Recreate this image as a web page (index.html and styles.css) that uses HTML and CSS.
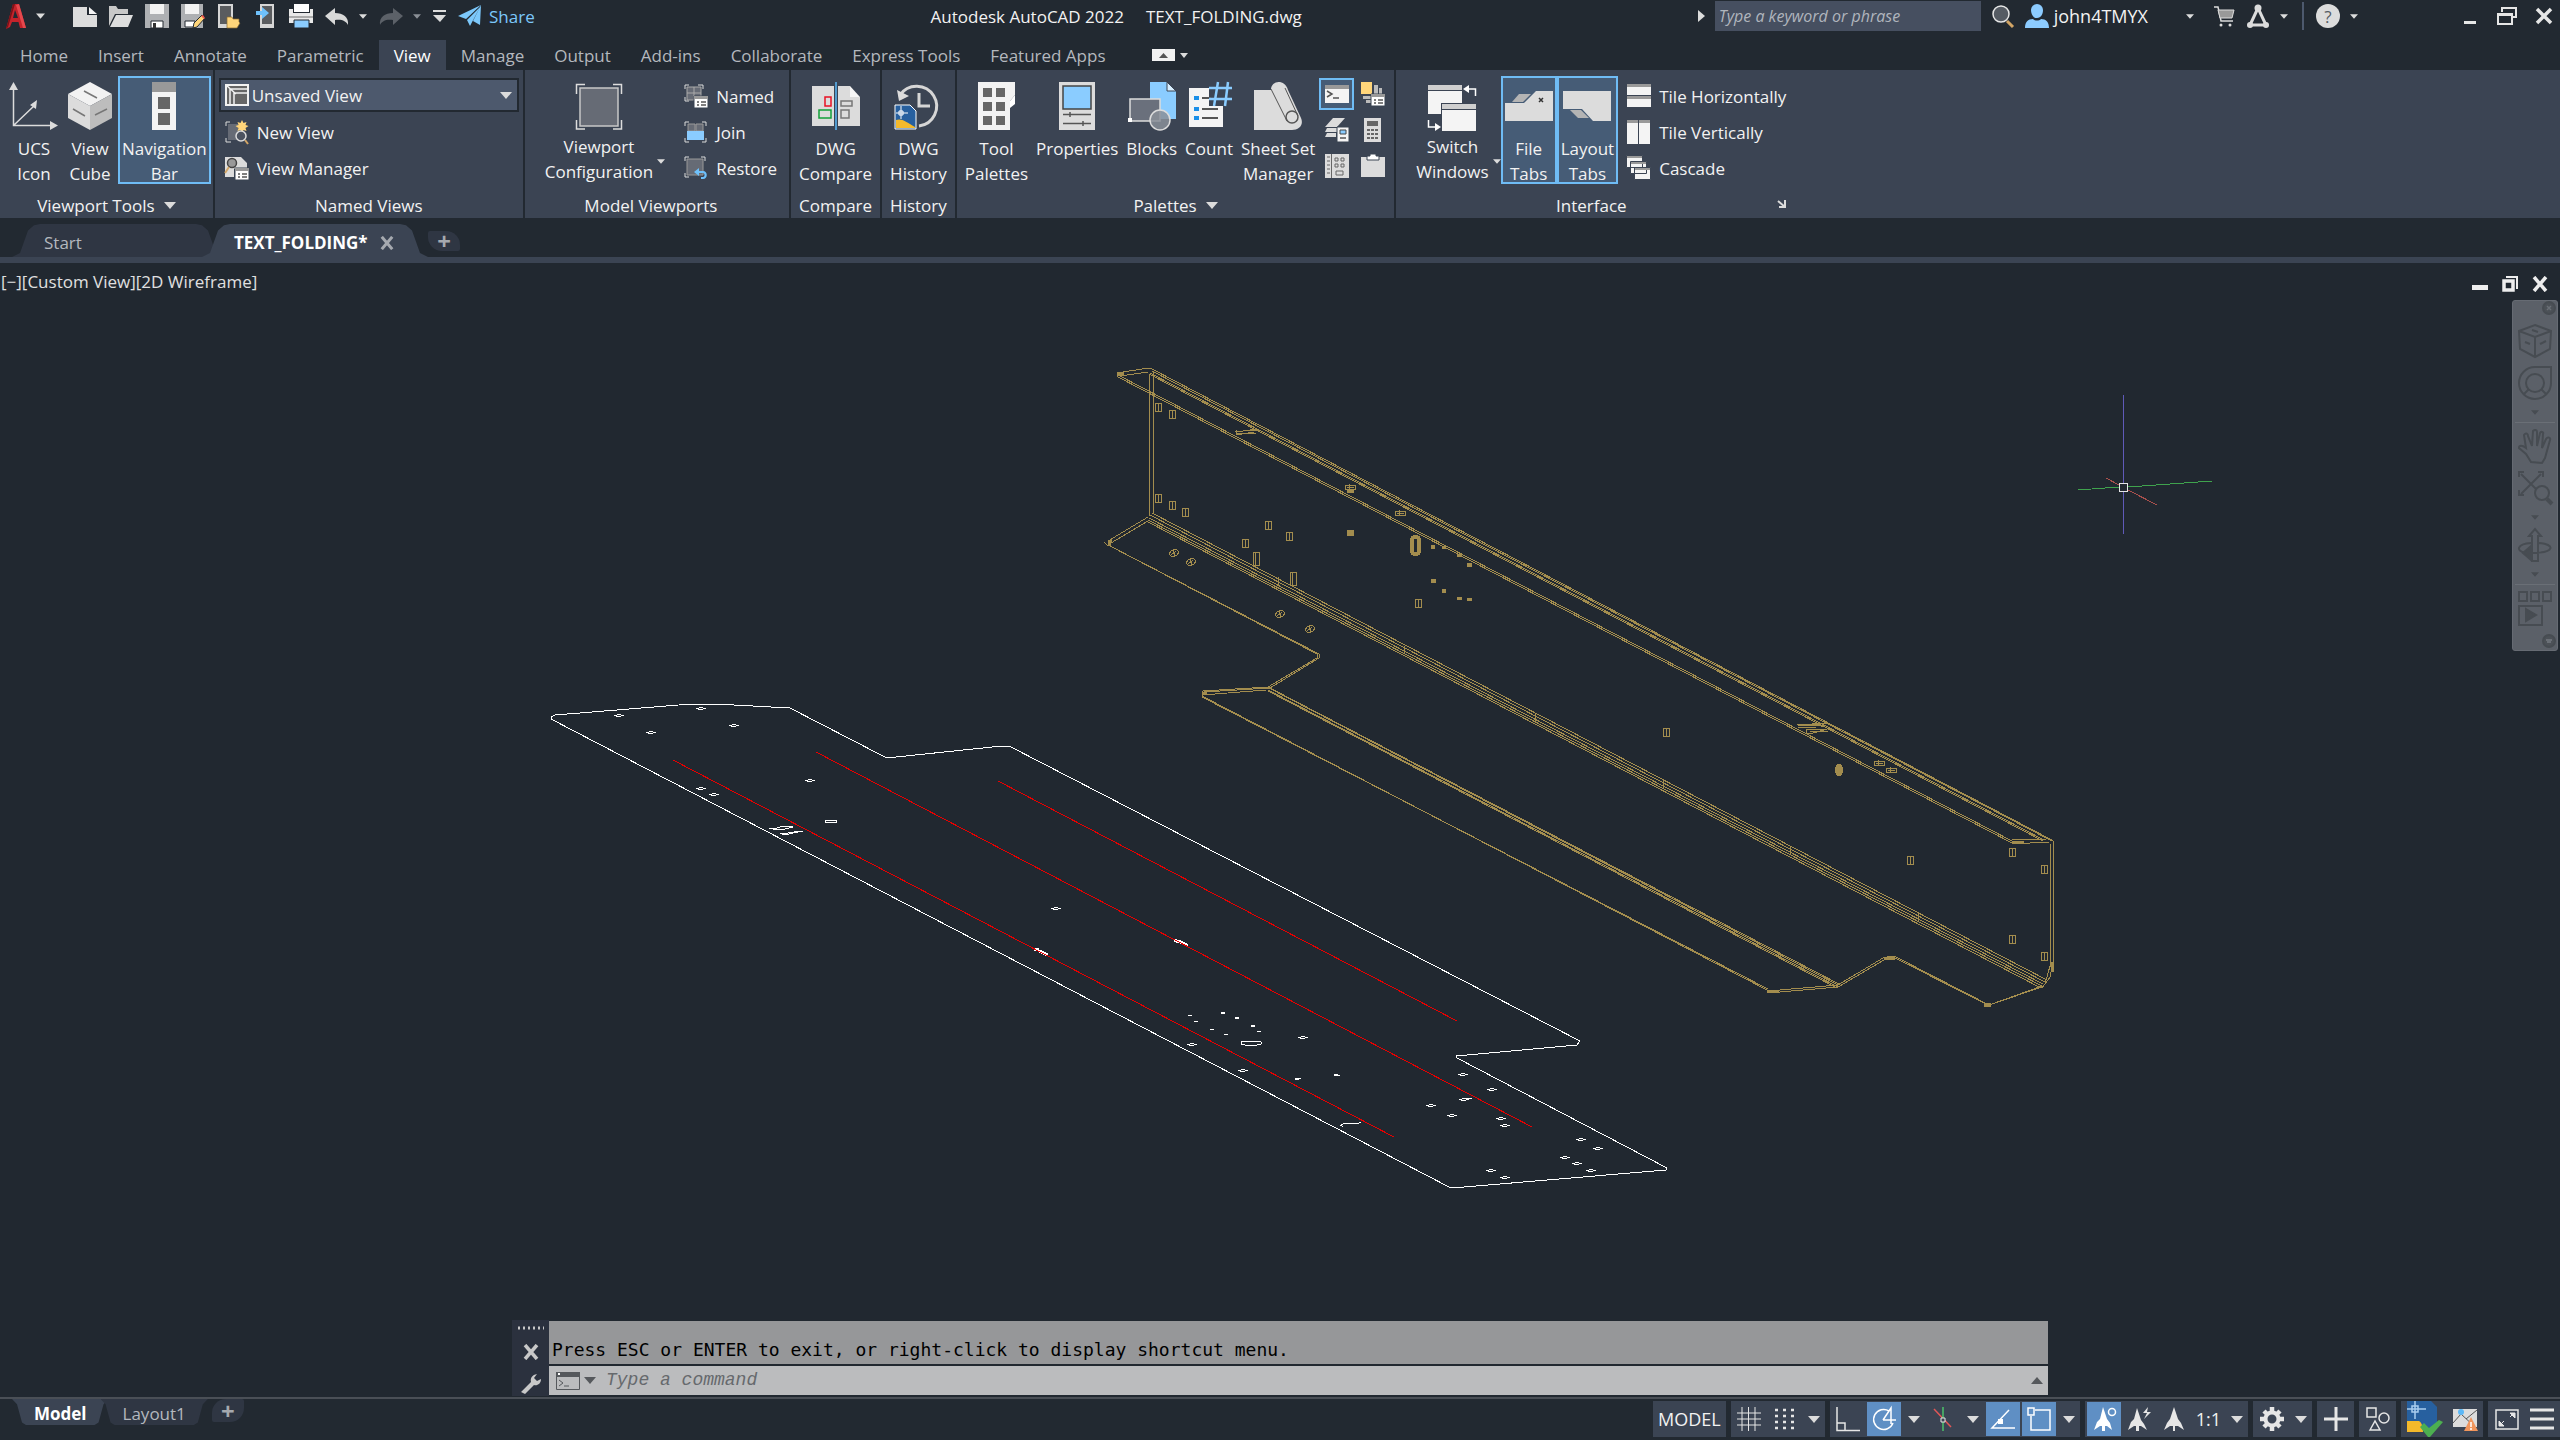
FILE: index.html
```
<!DOCTYPE html>
<html lang="en">
<head>
    <meta charset="UTF-8">
    <meta name="viewport" content="width=device-width, initial-scale=1.0">
    <title>Autodesk AutoCAD 2022 - TEXT_FOLDING.dwg</title>
    <link rel="stylesheet" href="styles.css">
</head>
<body>
    <!-- shared shapes -->
    <svg class="defs" width="0" height="0">
        <defs>
            <symbol id="caret" viewBox="0 0 12 7"><path d="M0 0h12L6 7z" fill="currentColor"/></symbol>
            <symbol id="x" viewBox="0 0 16 16"><path d="M2 1l12 14M14 1L2 15" stroke="currentColor" stroke-width="3.500"/></symbol>
            <g id="hole"><path d="M-3-4h6v8h-6zM0-4v9"/></g>
            <g id="slot"><path d="M-3-6h6v13h-6zM-1-6v13"/></g>
            <g id="tilt"><path d="M-5 1l2-3 5-2 3 3-2 3-5 2zM-3 2l5-4M-1-3l2 6"/></g>
            <g id="flat"><path d="M-5-2h10v4h-10zM-3 0h7M-1-3v6"/></g>
            <g id="pin"><path d="M-5 0h3M-2-1h4M2 0h3M-3 1h5"/></g>
        </defs>
    </svg>

    <header class="titlebar">
        <div class="quick">
            <button class="tool logo" aria-label="Application menu">
                <svg width="24" height="28" viewBox="0 0 24 28"><path d="M9 2h6l7 24h-6l-1.500-6H8l-2 5-4 2z" fill="#c4232b"/><path d="M11 8l-2 8h5z" fill="#222931"/><path d="M9 2l2 0-7 23-2 2z" fill="#7d1218"/><path d="M15 2l7 24h-3L12 3z" fill="#e5484d"/></svg>
            </button>
            <svg class="caret logo-caret"><use href="#caret"/></svg>
            <button class="tool" aria-label="New"><svg width="24" height="24" viewBox="0 0 24 24"><path d="M0 3h14v8h10v12H0z" fill="#dcdcdc"/><path d="M16 3l8 7h-8z" fill="#f4f4f4"/></svg></button>
            <button class="tool" aria-label="Open"><svg width="24" height="24" viewBox="0 0 24 24"><path d="M0 22V2h7l2 3h10v5H6z" fill="#c8c8c8"/><path d="M7 11h17l-5 12H1z" fill="#dedede"/></svg></button>
            <button class="tool" aria-label="Save"><svg width="24" height="24" viewBox="0 0 24 24"><path d="M0 0h24v24H0z" fill="#aeb0b3"/><path d="M5 0h14v10H5z" fill="#f2f2f2"/><path d="M6 17h12v7H6z" fill="#fff" stroke="#222931"/><path d="M8 19h3v5H8z" fill="#333"/></svg></button>
            <button class="tool" aria-label="Save As"><svg width="24" height="24" viewBox="0 0 24 24"><path d="M0 0h22v24H0z" fill="#aeb0b3"/><path d="M4 0h14v10H4z" fill="#f2f2f2"/><path d="M4 17h10v6H4z" fill="#fff" stroke="#222931"/><path d="M12 24l1-5 8-8 3 3-8 9z" fill="#ffd57a" stroke="#222931"/><path d="M20 12l2-1 2 3-1 1z" fill="#f0574f"/></svg></button>
            <button class="tool" aria-label="Open from Web and Mobile"><svg width="24" height="24" viewBox="0 0 24 24"><path d="M1 0h15v24H1z" fill="#d6d6d6"/><path d="M3 2h11v18H3z" fill="#5a5c5f"/><path d="M10 24V13h5l1 2h6v3l1 1-3 5z" fill="#ffd57a" stroke="#8a6a30" stroke-width=".7"/></svg></button>
            <button class="tool" aria-label="Save to Web and Mobile"><svg width="24" height="24" viewBox="0 0 24 24"><path d="M7 0h14v24H7z" fill="#d6d6d6"/><path d="M9 2h10v18H9z" fill="#5a5c5f"/><path d="M3 7h6V3l7 6-7 6v-4H3z" fill="#6fc1fb"/></svg></button>
            <button class="tool" aria-label="Plot"><svg width="24" height="24" viewBox="0 0 24 24"><path d="M5 0h15v8H5z" fill="#fff"/><path d="M0 5h4v4h17V5h3v14H0z" fill="#e8e8e8"/><path d="M0 12h24v2H0z" fill="#aaa"/><path d="M5 16h15v8H5z" fill="#8accff" stroke="#222931"/></svg></button>
            <button class="tool" aria-label="Undo"><svg width="24" height="24" viewBox="0 0 24 24"><path d="M0 12l10-8v5c8 0 14 4 13 12-2-4-6-6-13-5v5z" fill="#d9d9d9"/></svg></button>
            <svg class="caret small"><use href="#caret"/></svg>
            <button class="tool" aria-label="Redo"><svg width="24" height="24" viewBox="0 0 24 24"><path d="M24 12L14 4v5C6 9 0 13 1 21c2-4 6-6 13-5v5z" fill="#5c6168"/></svg></button>
            <svg class="caret small dim"><use href="#caret"/></svg>
            <button class="tool" aria-label="Customize Quick Access Toolbar"><svg width="13" height="12" viewBox="0 0 13 12"><path d="M0 0h13v2H0zM0 5h13l-6 7z" fill="#dcdcdc"/></svg></button>
            <button class="tool share"><svg width="24" height="24" viewBox="0 0 24 24"><path d="M0 12L23 1 8 15zM23 1l-1 20-7-4zM9 16L22 3 12 22z" fill="#7cc8fb"/></svg>Share</button>
        </div>
        <h1 class="doc-title"><span>Autodesk AutoCAD 2022</span><span>TEXT_FOLDING.dwg</span></h1>
        <div class="account">
            <svg width="7" height="12" viewBox="0 0 7 12"><path d="M0 0l7 6-7 6z" fill="#dcdcdc"/></svg>
            <input class="search" type="text" placeholder="Type a keyword or phrase" aria-label="Search help">
            <button class="tool" aria-label="Search"><svg width="24" height="24" viewBox="0 0 24 24"><path d="M16 17l6 6" stroke="#d2a566" stroke-width="3"/><circle cx="10" cy="10" r="8" fill="#555b63" stroke="#e6e6e6" stroke-width="1.500"/></svg></button>
            <button class="tool user"><svg width="24" height="24" viewBox="0 0 24 24"><path d="M6 6a6 6 0 0 1 12 0c0 4-2 8-6 8s-6-4-6-8zM0 24c0-6 3-9 8-9 2 2 6 2 8 0 5 0 8 3 8 9z" fill="#8ccbff"/></svg>john4TMYX</button>
            <svg class="caret small"><use href="#caret"/></svg>
            <button class="tool cart" aria-label="App Store"><svg width="24" height="24" viewBox="0 0 24 24"><path d="M2 3h4l3 14h12" fill="none" stroke="#dcdcdc" stroke-width="1.500"/><path d="M6 6h16l-2 8H8z" fill="#999" stroke="#dcdcdc"/><circle cx="9" cy="21" r="1.500" fill="#dcdcdc"/><circle cx="18" cy="21" r="1.500" fill="#dcdcdc"/></svg></button>
            <button class="tool" aria-label="Autodesk App"><svg width="24" height="24" viewBox="0 0 24 24"><path d="M12 4L4 21h16z" fill="none" stroke="#dcdcdc" stroke-width="3"/><circle cx="12" cy="4" r="3.500" fill="#dcdcdc"/><circle cx="4" cy="21" r="3" fill="#dcdcdc"/><circle cx="20" cy="21" r="3" fill="#dcdcdc"/></svg></button>
            <svg class="caret small"><use href="#caret"/></svg>
            <span class="divider"></span>
            <button class="tool help" aria-label="Help">?</button>
            <svg class="caret small"><use href="#caret"/></svg>
            <div class="window-buttons">
                <button class="tool" aria-label="Minimize"><svg width="24" height="24" viewBox="0 0 24 24"><path d="M6 17h12v3H6z" fill="#e6e6e6"/></svg></button>
                <button class="tool" aria-label="Restore"><svg width="24" height="24" viewBox="0 0 24 24"><path d="M7 8V4h14v9h-4M3 10h14v10H3zM3 11h14" fill="none" stroke="#e6e6e6" stroke-width="2"/></svg></button>
                <button class="tool" aria-label="Close"><svg width="24" height="24" viewBox="0 0 24 24"><path d="M5 5l14 14M19 5L5 19" stroke="#e6e6e6" stroke-width="3.500"/></svg></button>
            </div>
        </div>
    </header>

    <nav class="tabs">
        <button>Home</button>
        <button>Insert</button>
        <button>Annotate</button>
        <button>Parametric</button>
        <button class="active">View</button>
        <button>Manage</button>
        <button>Output</button>
        <button>Add-ins</button>
        <button>Collaborate</button>
        <button>Express Tools</button>
        <button>Featured Apps</button>
        <button class="minimize" aria-label="Minimize ribbon"><svg width="36" height="12" viewBox="0 0 36 12"><path d="M0 0h23v12H0z" fill="#f2f2f2"/><path d="M7 9l4.500-5L16 9z" fill="#555"/><path d="M28 4h8l-4 5z" fill="#dcdcdc"/></svg></button>
    </nav>

    <div class="ribbon">
        <section class="panel tools">
            <div class="panel-body">
                <button class="tall"><svg width="48" height="48" viewBox="0 0 48 48"><path d="M3.500 6v37.500H42M3.500 43.500L25 23" fill="none" stroke="#dcdcdc" stroke-width="1.500"/><path d="M-1 8L3.500 0 8 8zM40 39l8 4.500-8 4.500zM20 23l7-5-1 9z" fill="#dcdcdc"/></svg><span>UCS<br>Icon</span></button>
                <button class="tall"><svg width="48" height="48" viewBox="0 0 48 48"><path d="M24 0l22 12-22 12L2 12z" fill="#f2f2f2"/><path d="M2 12l22 12v24L2 36z" fill="#dcdcdc"/><path d="M46 12L24 24v24l22-12z" fill="#bdbdbd"/><path d="M18 9l13 7M7 27l12 7M29 33l12-6" stroke="#777" stroke-width="1.500"/></svg><span>View<br>Cube</span></button>
                <button class="tall on" aria-pressed="true"><svg width="48" height="48" viewBox="0 0 48 48"><path d="M12 0h24v48H12z" fill="#f4f4f4"/><path d="M12 0h24v10H12z" fill="#999"/><path d="M18 15h12v12H18zM18 31h12v12H18z" fill="#666"/></svg><span>Navigation<br>Bar</span></button>
            </div>
            <h2>Viewport Tools <svg class="caret"><use href="#caret"/></svg></h2>
        </section>

        <section class="panel views">
            <div class="panel-body stack">
                <label class="combo">
                    <svg width="24" height="24" viewBox="0 0 24 24"><path d="M1 2h22v20H1z" fill="#666" stroke="#f2f2f2" stroke-width="2"/><path d="M5 22V6h18M9 22V10h14M1 2l10 9" fill="none" stroke="#f2f2f2" stroke-width="1.500"/></svg>
                    <select aria-label="View"><option>Unsaved View</option></select>
                    <svg class="caret"><use href="#caret"/></svg>
                </label>
                <button class="row"><svg width="24" height="24" viewBox="0 0 24 24"><path d="M5 2H1v4M1 18v4h5" fill="none" stroke="#dcdcdc"/><path d="M3 4h10v16H3z" fill="#666b75"/><path d="M17 0l1.500 3 3-1-1 3 3 1-3 2 1 3-3-1-1.500 3-1.500-3-3 1 1-3-3-2 3-1-1-3 3 1z" fill="#ffd57a"/><path d="M20 20l3 4" stroke="#d2a566" stroke-width="2"/><circle cx="16" cy="16" r="5" fill="#4c5360" stroke="#dcdcdc" stroke-width="1.500"/></svg>New View</button>
                <button class="row"><svg width="24" height="24" viewBox="0 0 24 24"><path d="M0 1h16l6 6v6H9v8H0z" fill="#dcdcdc"/><circle cx="7" cy="7" r="4.500" fill="#999" stroke="#444" stroke-width="1.500"/><path d="M4 11l-4 6" stroke="#d2a566" stroke-width="2"/><path d="M10 12h14v12H10z" fill="#fff" stroke="#3b4453"/><path d="M10 12h14v3H10z" fill="#999"/><path d="M13 18h2M17 18h5M13 21h2M17 21h5" stroke="#555" stroke-width="1.500"/></svg>View Manager</button>
            </div>
            <h2>Named Views</h2>
        </section>

        <section class="panel viewports">
            <div class="panel-body">
                <button class="tall lifted"><svg width="48" height="48" viewBox="0 0 48 48"><path d="M5 6h38v38H5z" fill="#666b75" stroke="#c8c8c8" stroke-width="1.500"/><path d="M10 2.500H1.500V12M38 2.500h8.500V12M1.500 38v9H10M46.500 38v9H38" fill="none" stroke="#dcdcdc" stroke-width="1.500"/></svg><span>Viewport<br>Configuration</span></button>
                <svg class="caret small low"><use href="#caret"/></svg>
                <div class="stack">
                    <button class="row"><svg width="24" height="24" viewBox="0 0 24 24"><path d="M5 1H1v4M14 1h5v4M1 13v4h4" fill="none" stroke="#dcdcdc"/><path d="M3 3h14v13H3zM10 3v13M3 9h14" fill="#666b75" stroke="#aaa"/><path d="M10 12h14v12H10z" fill="#fff" stroke="#3b4453"/><path d="M10 12h14v3H10z" fill="#999"/><path d="M13 18h2M17 18h5M13 21h2M17 21h5" stroke="#555" stroke-width="1.500"/></svg>Named</button>
                    <button class="row"><svg width="24" height="24" viewBox="0 0 24 24"><path d="M5 2H1v4M18 2h4v4M1 18v4h4M22 18v4h-4" fill="none" stroke="#dcdcdc"/><path d="M4 4h7v7H4zM12 4h7v7h-7z" fill="#666b75" stroke="#999"/><path d="M3 11h17v9H3z" fill="#8accff"/></svg>Join</button>
                    <button class="row"><svg width="24" height="24" viewBox="0 0 24 24"><path d="M5 1H1v4M17 1h4v4M1 17v4h4" fill="none" stroke="#dcdcdc"/><path d="M3 3h16v16H3z" fill="#666b75" stroke="#999"/><path d="M15 12v3h4c5 0 5 8 0 8h-2v-2h2c2 0 2-4 0-4h-4v3l-5-4z" fill="#6fc1fb"/></svg>Restore</button>
                </div>
            </div>
            <h2>Model Viewports</h2>
        </section>

        <section class="panel narrow">
            <div class="panel-body">
                <button class="tall"><svg width="48" height="48" viewBox="0 0 48 48"><path d="M0 4h22v40H0zM26 4h12v11h10v29H26z" fill="#dcdcdc"/><path d="M38 4l10 11H38z" fill="#f6f6f6"/><path d="M24 0v48" stroke="#5cb8f7" stroke-width="1.500"/><path d="M13 15h6v9h-6z" fill="none" stroke="#e81123" stroke-width="1.500"/><path d="M7 28h12v8H7z" fill="none" stroke="#12a038" stroke-width="1.500"/><path d="M29 19h11v5H29zM29 28h8v8h-8z" fill="none" stroke="#777" stroke-width="1.500"/></svg><span>DWG<br>Compare</span></button>
            </div>
            <h2>Compare</h2>
        </section>

        <section class="panel narrow">
            <div class="panel-body">
                <button class="tall"><svg width="48" height="48" viewBox="0 0 48 48"><path d="M6 13a20 20 0 1 1 19 31" fill="none" stroke="#d6d6d6" stroke-width="3"/><path d="M3 8l2 11 10-5z" fill="#dcdcdc"/><path d="M25 11v13h11" fill="none" stroke="#d6d6d6" stroke-width="3"/><path d="M1 23h15l6 6v18H1z" fill="#27609f" stroke="#fff"/><path d="M2 38c6-2 10 2 19 7v1H2z" fill="#f4b92b"/><path d="M7 24v13M2 31h12M5 29h4v4H5z" fill="none" stroke="#fff"/></svg><span>DWG<br>History</span></button>
            </div>
            <h2>History</h2>
        </section>

        <section class="panel narrow">
            <div class="panel-body">
                <button class="tall"><svg width="48" height="48" viewBox="0 0 48 48"><path d="M6 0h37v13l-5 6v29H6z" fill="#f2f2f2"/><path d="M43 13v9l-5 4v-7z" fill="#fff"/><path d="M11 6h9v9h-9zM24 6h9v9h-9zM11 20h9v9h-9zM24 20h9v9h-9zM11 34h9v9h-9zM24 34h9v9h-9z" fill="#666"/></svg><span>Tool<br>Palettes</span></button>
                <button class="tall"><svg width="48" height="48" viewBox="0 0 48 48"><path d="M6 0h36v48H6z" fill="#dcdcdc"/><path d="M10 4h28v23H10z" fill="#8accff" stroke="#444" stroke-width="1.500"/><path d="M10 32.500h28M10 41.500h28M17 30v5M30 39v5" stroke="#555" stroke-width="1.500"/></svg><span>Properties</span></button>
                <button class="tall"><svg width="48" height="48" viewBox="0 0 48 48"><path d="M22 0h17l9 9v28H22z" fill="#8accff"/><path d="M39 0v9h9z" fill="#d8eeff" stroke="#3b4453"/><path d="M2 17h30v22H2z" fill="#6a707c" stroke="#dcdcdc" stroke-width="1.500"/><circle cx="32" cy="38" r="10" fill="#8a8f99" fill-opacity=".85" stroke="#dcdcdc" stroke-width="1.500"/><path d="M0 36h4v4H0z" fill="#fff"/></svg><span>Blocks</span></button>
                <button class="tall"><svg width="48" height="48" viewBox="0 0 48 48"><path d="M4 6h20v18h14v21H4z" fill="#f4f4f4"/><path d="M9 14h5v4H9zM9 25h5v4H9zM9 34h5v4H9z" fill="#1a8fe8"/><path d="M17 16h9M17 27h16M17 36h16" stroke="#555" stroke-width="2"/><path d="M24 6h23M24 17h23M33 0l-4 24M43 0l-3 24" stroke="#8accff" stroke-width="2.500"/></svg><span>Count</span></button>
                <button class="tall"><svg width="48" height="48" viewBox="0 0 48 48"><path d="M0 8h17c0-10 14-11 17 0l13 28c3 7-2 12-9 12H0z" fill="#dcdcdc"/><path d="M17 7l16 32M31 6l13 28" fill="none" stroke="#555" stroke-width="1"/><circle cx="38" cy="35" r="6" fill="none" stroke="#555" stroke-width="1.500"/></svg><span>Sheet Set<br>Manager</span></button>
                <div class="mini">
                    <button class="on" aria-label="Command line" aria-pressed="true"><svg width="24" height="24" viewBox="0 0 24 24"><path d="M0 3h24v18H0z" fill="#f4f4f4"/><path d="M0 3h24v4H0z" fill="#999"/><path d="M2 9l5 3-5 3M8 16h6" fill="none" stroke="#555" stroke-width="1.500"/></svg></button>
                    <button aria-label="Design center"><svg width="24" height="24" viewBox="0 0 24 24"><path d="M0 0h11v12H0z" fill="#ffd57a"/><path d="M13 3h4v9h-4zM18 6h3v6h-3zM2 14h8v3H2zM5 18h5v3H5z" fill="#bbb"/><path d="M10 12h14v12H10z" fill="#fff" stroke="#3b4453"/><path d="M10 12h14v3H10z" fill="#999"/><path d="M13 18h2M17 18h5M13 21h2M17 21h5" stroke="#555" stroke-width="1.500"/></svg></button>
                    <button aria-label="Layer properties"><svg width="24" height="24" viewBox="0 0 24 24"><path d="M8 0h12l-8 9H0zM2 10h10v4H0zM2 15h9v4H0z" fill="#dcdcdc"/><path d="M12 9h12v15H12z" fill="#f4f4f4" stroke="#3b4453"/><path d="M15 12h6v4h-6z" fill="#8accff" stroke="#444"/><path d="M15 20h6" stroke="#555" stroke-width="1.500"/></svg></button>
                    <button aria-label="Quick calculator"><svg width="24" height="24" viewBox="0 0 24 24"><path d="M3 0h17v24H3z" fill="#dcdcdc"/><path d="M6 3h11v5H6zM6 11h3v2H6zM10 11h3v2h-3zM14 11h3v2h-3zM6 15h3v2H6zM10 15h3v2h-3zM14 15h3v2h-3zM6 19h3v2H6zM10 19h3v2h-3zM14 19h3v2h-3z" fill="#666"/></svg></button>
                    <button aria-label="External references"><svg width="24" height="24" viewBox="0 0 24 24"><path d="M0 0h24v24H0z" fill="#dcdcdc"/><path d="M6.500 0v24M2 3h3M2 7h3M2 11h3M2 15h3M2 19h3M10 4h3v3h-3zM16 4h3v3h-3zM10 10h3v3h-3zM16 10h3v3h-3zM11 17h7v4h-7z" fill="none" stroke="#666"/></svg></button>
                    <button aria-label="Markup set manager"><svg width="24" height="24" viewBox="0 0 24 24"><path d="M0 3h24v20H0z" fill="#dcdcdc"/><path d="M6 6V2h3V0h6v2h3v4z" fill="#fff" stroke="#3b4453"/></svg></button>
                </div>
            </div>
            <h2>Palettes <svg class="caret"><use href="#caret"/></svg></h2>
        </section>

        <section class="panel interface">
            <div class="panel-body">
                <button class="tall lifted"><svg width="48" height="48" viewBox="0 0 48 48"><path d="M0 3h34v29H0z" fill="#f4f4f4"/><path d="M0 3h34v5H0z" fill="#cfcfcf"/><path d="M0 8.500h34" stroke="#3b4453"/><path d="M13 21h35v28H13z" fill="#3b4453"/><path d="M14 22h34v27H14z" fill="#f4f4f4"/><path d="M14 22h34v5H14z" fill="#cfcfcf"/><path d="M14 27.500h34" stroke="#3b4453"/><path d="M47.500 14V7H40M.5 38v7H8" fill="none" stroke="#fff" stroke-width="1.500"/><path d="M35 7l6-4v8zM13 45l-6-4v8z" fill="#fff"/></svg><span>Switch<br>Windows</span></button>
                <svg class="caret small low"><use href="#caret"/></svg>
                <button class="tall on" aria-pressed="true"><svg width="48" height="48" viewBox="0 0 48 48"><path d="M0 21h19L31 9h17v30H0z" fill="#dcdcdc"/><path d="M7 20l7-8h12l-8 8z" fill="#b4b4b4"/><path d="M34 16l4 4M38 16l-4 4" stroke="#333" stroke-width="1.500"/></svg><span>File<br>Tabs</span></button>
                <button class="tall on" aria-pressed="true"><svg width="48" height="48" viewBox="0 0 48 48"><path d="M0 9h48v30H30L19 27H0z" fill="#dcdcdc"/><path d="M7 28h11l8 8H15z" fill="#b4b4b4"/></svg><span>Layout<br>Tabs</span></button>
                <div class="stack">
                    <button class="row"><svg width="24" height="24" viewBox="0 0 24 24"><path d="M0 0h24v11H0zM0 12h24v11H0z" fill="#f4f4f4"/><path d="M0 0h24v3H0zM0 12h24v3H0z" fill="#999"/></svg>Tile Horizontally</button>
                    <button class="row"><svg width="24" height="24" viewBox="0 0 24 24"><path d="M0 0h11v24H0zM12 0h11v24H12z" fill="#f4f4f4"/><path d="M0 0h11v3H0zM12 0h11v3H12z" fill="#999"/></svg>Tile Vertically</button>
                    <button class="row"><svg width="24" height="24" viewBox="0 0 24 24"><g stroke="#3b4453"><path d="M-.5-.5h16v12h-16zM3.500 5.500h16v12h-16zM7.500 11.500h16v12h-16z" fill="#f4f4f4"/></g><path d="M0 0h15v2H0zM4 6h15v2H4zM8 12h15v2H8z" fill="#999"/></svg>Cascade</button>
                </div>
            </div>
            <h2>Interface<button class="launcher" aria-label="Display options"><svg width="8" height="8" viewBox="0 0 8 8"><path d="M0 1l7 6M7 0v7H1" fill="none" stroke="#dcdcdc" stroke-width="2"/></svg></button></h2>
        </section>
    </div>

    <div class="file-tabs">
        <button class="file-tab">Start</button>
        <button class="file-tab active">TEXT_FOLDING*<svg class="close"><use href="#x"/></svg></button>
        <button class="add-tab" aria-label="New drawing">+</button>
    </div>

    <main class="canvas">
        <svg class="drawing" viewBox="0 263 2560 1134" preserveAspectRatio="xMidYMid slice">
            <!-- flat pattern -->
            <path class="sheet" d="M551 717l4-2 136-11h24l75 4 91 47 4 2h11l106-11 9 1 569 294-3 4-121 11 1 2 210 110-1 2-202 17h-15L551 719z"/>
            <g class="sheet">
                <use href="#pin" x="619" y="715"/><use href="#pin" x="701" y="708"/><use href="#pin" x="651" y="732"/><use href="#pin" x="734" y="725"/>
                <use href="#pin" x="810" y="780"/><use href="#pin" x="701" y="788"/><use href="#pin" x="714" y="794"/><use href="#pin" x="1056" y="908"/>
                <use href="#pin" x="1303" y="1037"/><use href="#pin" x="1192" y="1044"/><use href="#pin" x="1243" y="1070"/>
                <use href="#pin" x="1463" y="1074"/><use href="#pin" x="1492" y="1089"/><use href="#pin" x="1431" y="1105"/><use href="#pin" x="1452" y="1115"/>
                <use href="#pin" x="1464" y="1099"/><use href="#pin" x="1501" y="1118"/><use href="#pin" x="1505" y="1125"/>
                <use href="#pin" x="1581" y="1139"/><use href="#pin" x="1598" y="1148"/><use href="#pin" x="1565" y="1157"/><use href="#pin" x="1577" y="1163"/>
                <use href="#pin" x="1591" y="1170"/><use href="#pin" x="1491" y="1170"/><use href="#pin" x="1505" y="1177"/>
                <path d="M825 820h11v2h-11zM769 828h8l6-2h7l3 1-8 2h-12zM780 833h8l12-2h3l-10 2-8 2zM1243 1041h14l4 1v2l-4 1h-12l-4-1v-2zM1340 1126l3-2 16-1 2-1M1341 1125l2 2"/>
            </g>
            <path class="sheet" d="M1188 1015h4M1194 1021h4M1210 1029h4M1224 1034h4M1221 1012h4M1221 1013h4M1235 1017h4M1235 1018h4M1251 1025h4M1251 1026h4M1257 1031h4M1295 1078h6M1295 1079h4M1334 1074h4M1334 1075h6M1464 1098h8"/>
            <path class="sheet thick" d="M1034 949h5M1039 951l9 4M1174 940l5 2M1179 941l9 5"/>
            <path class="bend" d="M673 760l721 377M816 752l716 375M998 781l459 240"/>
            <!-- folded part -->
            <g class="part">
                <path d="M1148 368l4 1 898 470M1152 371l900 470M1150 373l894 467M1149 374l894 467M1117 373l31-5M1120 376l28-4M1118 375l894 466M1118 377l894 466M1117 372v5l4-3M2012 840l35-1M2012 844l37-2M2050 839l3 2v3"/>
                <path d="M1149 374v142M1153 371v142M2050 844v122l-5 18M2053 844v119l-3 14-8 11"/>
                <path d="M1152 513l895 467M1150 515l895 467M1149 518l894 466M1148 520l894 466M1148 522l893 466"/>
                <path d="M1148 517l-40 24v4l211 109v4l-49 30-66 4-2 4 565 294M1148 521l-37 22-1 3 207 108v4l-49 29-65 4-1 6 566 292M1104 542l4 4M1266 690l-64 5"/>
                <path d="M1268 687l571 297M1269 688l569 297M1268 690l570 297M1268 691l569 297"/>
                <path d="M1768 991l70-6 45-27 8-2 5 1 93 48 53-18M1768 993l70-6 46-27 11-2 93 47 4-1 50-18M1278 577v8M1404 646v8M1535 713v8M1663 780v8M1790 847v8M1918 914v8"/>
                <path d="M1235 431h8l15-2M1236 435l18-3M1236 430v5M1236 433h20M1246 430h13M1797 724h20l6 3M1798 727h18M1798 725h28M1807 729h20l-14 4h-7zM1810 731h18M1812 723h14"/>
                <use href="#hole" x="1158" y="407"/><use href="#hole" x="1172" y="414"/><use href="#hole" x="1158" y="498"/><use href="#hole" x="1172" y="505"/>
                <use href="#hole" x="1185" y="512"/><use href="#hole" x="1268" y="525"/><use href="#hole" x="1289" y="536"/><use href="#hole" x="1245" y="543"/>
                <use href="#hole" x="1418" y="603"/><use href="#hole" x="1666" y="732"/><use href="#hole" x="1910" y="860"/><use href="#hole" x="2012" y="852"/>
                <use href="#hole" x="2044" y="869"/><use href="#hole" x="2012" y="939"/><use href="#hole" x="2044" y="956"/>
                <use href="#slot" x="1256" y="558"/><use href="#slot" x="1293" y="578"/>
                <use href="#tilt" x="1174" y="553"/><use href="#tilt" x="1191" y="562"/><use href="#tilt" x="1280" y="614"/><use href="#tilt" x="1310" y="629"/>
                <use href="#flat" x="1350" y="487"/><use href="#flat" x="1400" y="513"/><use href="#flat" x="1879" y="763"/><use href="#flat" x="1891" y="770"/>
            </g>
            <g class="solid">
                <path d="M1118 372h6v3h-6zM1108 540l4-1v4l-3 2zM1202 692h5v3h-5zM1767 990h12v3h-12zM1884 957h11v3h-11zM1984 1003h7v4h-7zM2012 841h12v3h-12zM2050 962h4v10h-3zM1347 489h7v4h-7zM1347 530h7v6h-7z"/>
                <ellipse cx="1839" cy="770" rx="4" ry="6"/>
                <path d="M1431 545h4v4h-4zM1442 546h4v3h-4zM1457 554h5v3h-5zM1467 563h5v4h-5zM1431 579h5v4h-5zM1442 589h4v4h-4zM1457 597h5v3h-5zM1467 598h5v3h-5z"/>
            </g>
            <rect class="ring" x="1412" y="537" width="7" height="17" rx="3"/>
            <!-- crosshair -->
            <g class="cross">
                <path d="M2123 395v88M2123 492v42" stroke="#5f5ab8"/>
                <path d="M2078 490l41-3M2128 487l84-6" stroke="#3fa34d"/>
                <path d="M2106 478l13 7M2128 490l29 15" stroke="#a8504c"/>
                <path d="M2119 483h8v8h-8z" stroke="#e6e6e6"/>
            </g>
        </svg>

        <div class="view-head">
            <p class="view-label">[−][Custom View][2D Wireframe]</p>
            <div class="mdi">
                <button aria-label="Minimize drawing"><svg width="16" height="16" viewBox="0 0 16 16"><path d="M0 9h16v5H0z" fill="#eee"/></svg></button>
                <button aria-label="Restore drawing"><svg width="16" height="16" viewBox="0 0 16 16"><path d="M5 2V1h10v11h-1" fill="none" stroke="#eee" stroke-width="2"/><path d="M2 5h9v9H2z" fill="none" stroke="#eee" stroke-width="3.500"/></svg></button>
                <button aria-label="Close drawing"><svg width="16" height="16"><use href="#x"/></svg></button>
            </div>
        </div>

        <div class="navbar">
            <button class="dot" aria-label="Close navigation bar"><svg width="12" height="12" viewBox="0 0 12 12"><circle cx="6" cy="6" r="6" fill="#4c5157"/><path d="M4 4l4 4M8 4l-4 4" stroke="#6a6f76" stroke-width="1.500"/></svg></button>
            <button class="first" aria-label="View cube"><svg width="34" height="34" viewBox="0 0 34 34"><path d="M17 1l16 6-1 18-15 8L2 25 1 7zM1 7l16 6 16-6M17 13v20M14 6l6 2M7 18l5 2M22 20l6-3"/></svg></button>
            <button aria-label="Steering wheel"><svg width="34" height="34" viewBox="0 0 34 34"><path d="M17 1h16v16A16 16 0 1 1 17 1zM11 23l-5 5M23 23l5 5"/><circle cx="17" cy="17" r="9"/></svg></button>
            <svg class="caret small"><use href="#caret"/></svg>
            <hr>
            <button aria-label="Pan"><svg width="34" height="34" viewBox="0 0 34 34"><path d="M13 33l-5-8-7-6c0-3 3-3 7 0L6 6c2-3 4-1 4 1l4 10 1-15c2-2 4-1 4 1v14l3-13c1-2 4-1 3 1l-1 14 4-9c2-3 5-1 4 1l-5 18-3 5z"/></svg></button>
            <button aria-label="Zoom"><svg width="34" height="34" viewBox="0 0 34 34"><path d="M3 3l20 20M3 23L23 3M1 6V1h5M20 1h5v5M1 19v5h5"/><circle cx="24" cy="22" r="7" fill="#5b6068"/><path d="M29 28l5 5" stroke-width="4"/></svg></button>
            <svg class="caret small"><use href="#caret"/></svg>
            <button aria-label="Orbit"><svg width="34" height="34" viewBox="0 0 34 34"><path d="M14 33V8h-3l6-7 6 7h-3v25zM13 15C-1 16-3 23 8 25M21 15c16 1 17 10-8 10"/><path d="M12 19v12l-7-6z" fill="#474c52"/></svg></button>
            <svg class="caret small"><use href="#caret"/></svg>
            <hr>
            <button aria-label="Show motion"><svg width="34" height="36" viewBox="0 0 34 36"><path d="M1 1h8v9H1zM13 1h8v9h-8zM25 1h8v9h-8zM1 15h23v19H1z"/><path d="M8 18l10 6-10 6z" fill="#474c52"/></svg></button>
            <button class="dot" aria-label="Customize navigation bar"><svg width="12" height="12" viewBox="0 0 12 12"><circle cx="6" cy="6" r="6" fill="#4c5157"/><path d="M3 5h6M4 7h4" stroke="#6a6f76"/></svg></button>
        </div>

        <div class="command">
            <div class="command-grip">
                <svg width="26" height="4" viewBox="0 0 26 4"><path d="M0 2h26" stroke="#c8c8c8" stroke-width="3" stroke-dasharray="2 3"/></svg>
                <button aria-label="Close command line"><svg width="16" height="16"><use href="#x"/></svg></button>
                <button aria-label="Customize"><svg width="20" height="20" viewBox="0 0 20 20"><path d="M0 18L10 8c-1-4 1-7 6-8l-3 4 3 3 4-2c0 5-4 7-7 6L4 20z" fill="currentColor"/></svg></button>
            </div>
            <div class="command-main">
                <p class="history">Press ESC or ENTER to exit, or right-click to display shortcut menu.</p>
                <label class="prompt">
                    <svg width="24" height="18" viewBox="0 0 24 18"><path d="M.5.5h23v17H.5zM3 8l4 3-4 3M8 14h5" fill="none" stroke="#55585c"/><path d="M0 0h24v5H0z" fill="#55585c"/><path d="M2 1h2v2H2z" fill="#fff"/></svg>
                    <svg class="caret"><use href="#caret"/></svg>
                    <input type="text" placeholder="Type a command" aria-label="Command">
                    <svg class="caret up"><use href="#caret"/></svg>
                </label>
            </div>
        </div>
    </main>

    <footer class="statusbar">
        <div class="layout-tabs">
            <button class="layout-tab active">Model</button>
            <button class="layout-tab">Layout1</button>
            <button class="add-layout" aria-label="New layout">+</button>
        </div>
        <div class="status">
            <div class="group"><button class="text">MODEL</button></div>
            <div class="group">
                <button aria-label="Grid"><svg width="24" height="24" viewBox="0 0 24 24"><path d="M5 0v24M11.500 0v24M18 0v24M0 6h24M0 12h24M0 18h24" stroke="#e6e6e6"/></svg></button>
                <button aria-label="Snap"><svg width="24" height="24" viewBox="0 0 24 24"><path d="M3 3h20M3 9h20M3 15h20M3 21h20" stroke="#e6e6e6" stroke-width="2.500" stroke-dasharray="3 5"/></svg></button>
                <svg class="caret"><use href="#caret"/></svg>
            </div>
            <div class="group">
                <button aria-label="Ortho"><svg width="24" height="24" viewBox="0 0 24 24"><path d="M1 0v23.500h23M1 16h8v8" fill="none" stroke="#e6e6e6" stroke-width="1.500"/></svg></button>
                <button class="on" aria-label="Polar tracking"><svg width="24" height="24" viewBox="0 0 24 24"><path d="M21 16A10 10 0 1 1 17 4M11 13L19 1v16M11 13h13" fill="none" stroke="#fff" stroke-width="1.500"/></svg></button>
                <svg class="caret"><use href="#caret"/></svg>
                <button aria-label="Isometric drafting"><svg width="24" height="24" viewBox="0 0 24 24"><path d="M3 2l17 18" stroke="#e05757" stroke-width="1.500"/><path d="M12 0v24" stroke="#4cc26a" stroke-width="1.500"/><path d="M10 11h4v4h-4z" fill="#3b4453" stroke="#e6e6e6"/></svg></button>
                <svg class="caret"><use href="#caret"/></svg>
                <button class="on" aria-label="Object snap tracking"><svg width="24" height="24" viewBox="0 0 24 24"><path d="M24 21H1L18 3" fill="none" stroke="#fff" stroke-width="1.500"/><path d="M7 12h5v5H7z" fill="#fff"/></svg></button>
                <button class="on" aria-label="Object snap"><svg width="24" height="24" viewBox="0 0 24 24"><path d="M8 3h15v20H4V9" fill="none" stroke="#fff" stroke-width="1.500"/><path d="M1 1h6v7H1z" fill="none" stroke="#fff" stroke-width="1.500"/></svg></button>
                <svg class="caret"><use href="#caret"/></svg>
            </div>
            <div class="group">
                <button class="on" aria-label="Annotation visibility"><svg width="24" height="24" viewBox="0 0 24 24"><path d="M11 0l4 12 3 4 2 7-5-4h-2v5h-3v-5H8l-6 4 3-8 3-3z" fill="#fff"/><circle cx="20" cy="5" r="3.500" fill="none" stroke="#fff" stroke-width="1.500"/></svg></button>
                <button aria-label="Add scales"><svg width="24" height="24" viewBox="0 0 24 24"><path d="M10 1l4 12 3 4 3 6-6-4h-2v5H9v-5H7l-6 4 3-8 3-3z" fill="#e6e6e6"/><path d="M21 0l-5 6h4l-3 6 7-7h-4z" fill="#e6e6e6"/></svg></button>
                <button aria-label="Annotation scale"><svg width="24" height="24" viewBox="0 0 24 24"><path d="M12 0l4 12 3 4 3 7-6-4h-3v5h-2v-5H8l-6 4 3-7 3-4z" fill="#e6e6e6"/></svg></button>
                <button class="text">1:1</button>
                <svg class="caret"><use href="#caret"/></svg>
            </div>
            <div class="group">
                <button aria-label="Workspace"><svg width="24" height="24" viewBox="0 0 24 24"><path d="M12 0v24M0 12h24M4 4l16 16M20 4L4 20" stroke="#e6e6e6" stroke-width="4.500"/><circle cx="12" cy="12" r="6.500" fill="#3b4453" stroke="#e6e6e6" stroke-width="4"/></svg></button>
                <svg class="caret"><use href="#caret"/></svg>
            </div>
            <div class="group"><button aria-label="Annotation monitor"><svg width="24" height="24" viewBox="0 0 24 24"><path d="M12 0v24M0 12h24" stroke="#e6e6e6" stroke-width="3"/></svg></button></div>
            <div class="group"><button aria-label="Isolate objects"><svg width="24" height="24" viewBox="0 0 24 24"><path d="M1 1h9v9H1zM4 23l5-9 5 9z" fill="none" stroke="#e6e6e6" stroke-width="1.500"/><circle cx="18" cy="11" r="5" fill="none" stroke="#e6e6e6" stroke-width="1.500"/></svg></button></div>
            <div class="group">
                <button class="wide" aria-label="Trusted DWG"><svg width="36" height="36" viewBox="0 0 36 36"><path d="M0 0h24l6 6v22H0z" fill="#27609f"/><path d="M0 20h12c3 2 4 6 4 11H0z" fill="#f4b92b"/><path d="M8 0v18M0 8h19M5 5h6v6H5z" fill="none" stroke="#a9cdf0" stroke-width="1.500"/><path d="M13 26l4-4 5 5 10-8 4 2-13 15h-2z" fill="#4caf50"/></svg></button>
                <button aria-label="Performance"><svg width="24" height="24" viewBox="0 0 24 24"><path d="M0 2h24v18H0z" fill="#dcdcdc"/><path d="M0 16l8-9 14 13M13 12l11-9" fill="none" stroke="#555"/><circle cx="8" cy="5" r="3" fill="#5cb8f7"/><path d="M18 10l7 14H11z" fill="#f0955c"/><path d="M18 15v5M18 21v2" stroke="#fff" stroke-width="1.500"/></svg></button>
            </div>
            <div class="group">
                <button aria-label="Clean screen"><svg width="24" height="24" viewBox="0 0 24 24"><path d="M1 3h22v19H1z" fill="none" stroke="#e6e6e6" stroke-width="1.500"/><path d="M15 6h5v5zM4 14v5h5zM15 10l3-3M6 17l3-3" fill="#e6e6e6" stroke="#e6e6e6"/></svg></button>
                <button aria-label="Customization"><svg width="24" height="24" viewBox="0 0 24 24"><path d="M0 3h24M0 12h24M0 21h24" stroke="#e6e6e6" stroke-width="3"/></svg></button>
            </div>
        </div>
    </footer>
</body>
</html>
```
FILE: styles.css
```
* {
    box-sizing: border-box;
}
body {
    margin: 0;
    height: 100vh;
    display: flex;
    flex-direction: column;
    background: #222931;
    color: #f2f2f2;
    font-family: 'Open Sans', 'Noto Sans', sans-serif;
    font-size: 17px;
    line-height: 25px;
    overflow: hidden;
}
button, input, select {
    font: inherit;
    color: inherit;
    background: none;
    border: none;
    padding: 0;
    margin: 0;
}
button {
    cursor: pointer;
    white-space: nowrap;
}
svg {
    display: block;
    flex: none;
    overflow: visible;
}
h1, h2, p {
    margin: 0;
    font-size: inherit;
    font-weight: normal;
}
.defs {
    position: absolute;
}
.caret {
    width: 12px;
    height: 7px;
    color: #dcdcdc;
}
.caret.small {
    width: 8px;
    height: 5px;
}
.caret.dim {
    color: #8a8f96;
}

/* title bar */
.titlebar {
    display: flex;
    align-items: center;
    height: 32px;
    padding: 0 4px;
}
.quick, .account, .tool, .window-buttons {
    display: flex;
    align-items: center;
}
.quick {
    gap: 12px;
}
.quick .small {
    margin-left: -2px;
}
.logo-caret {
    width: 9px;
    height: 6px;
    margin: 0 16px 0 -4px;
}
.share {
    gap: 7px;
    color: #7cc8fb;
}
.doc-title {
    flex: 1;
    display: flex;
    justify-content: center;
    gap: 22px;
    white-space: nowrap;
}
.account {
    gap: 10px;
}
.search {
    width: 266px;
    height: 30px;
    padding: 0 4px;
    background: #464f60;
    font-style: italic;
    font-size: 16px;
}
.search::placeholder {
    color: #b0b5bd;
    opacity: 1;
}
.user {
    gap: 5px;
    margin-right: 28px;
    font-size: 18px;
}
.cart {
    margin-left: 8px;
}
.divider {
    width: 2px;
    height: 28px;
    margin: 0 2px 0 4px;
    background: #4d596d;
}
.help {
    width: 24px;
    height: 24px;
    justify-content: center;
    border-radius: 50%;
    background: #dcdcdc;
    color: #555b63;
}
.window-buttons {
    gap: 13px;
    margin-left: 90px;
}

/* ribbon tabs */
.tabs {
    display: flex;
    height: 38px;
    padding: 8px 0 0 5px;
}
.tabs button {
    padding: 0 15px;
    color: #b4b8be;
}
.tabs .active {
    background: #3b4453;
    color: #fff;
}
.tabs .minimize {
    margin-left: 16px;
}

/* ribbon */
.ribbon {
    display: flex;
    height: 148px;
    background: #3b4453;
}
.panel {
    display: flex;
    flex-direction: column;
    border-right: 2px solid #222931;
}
.panel:last-child {
    border-right: none;
}
.panel-body {
    flex: 1;
    display: flex;
    padding-top: 6px;
}
.panel h2 {
    display: flex;
    align-items: center;
    justify-content: center;
    gap: 9px;
    height: 26px;
}
.tools .panel-body {
    padding-left: 6px;
    padding-right: 2px;
}
.narrow .panel-body {
    padding: 6px 4px 0;
}
.tall {
    display: flex;
    flex-direction: column;
    align-items: center;
    justify-content: flex-start;
    gap: 6px;
    height: 108px;
    padding: 4px 2px 0;
    border: 2px solid transparent;
    text-align: center;
}
.lifted {
    gap: 4px;
}
.on {
    background: #465c76;
    border: 2px solid #6fbcf5;
}
.stack {
    display: flex;
    flex-direction: column;
    padding-top: 2px;
}
.panel-body.stack {
    padding: 8px 4px 0;
}
.row {
    display: flex;
    align-items: center;
    gap: 8px;
    height: 36px;
}
.views {
    width: 310px;
}
.views .row {
    padding-left: 6px;
}
.combo {
    display: flex;
    align-items: center;
    height: 34px;
    margin-bottom: 2px;
    padding: 0 5px 0 4px;
    border: 2px solid #222931;
    background: #4d596d;
}
.combo select {
    flex: 1;
    appearance: none;
    padding-left: 3px;
}
.viewports .panel-body, .interface .panel-body {
    padding-left: 16px;
}
.viewports {
    padding-right: 12px;
}
.viewports .stack {
    margin-left: 19px;
}
.low {
    margin-top: 83px;
}
.mini {
    display: grid;
    grid-template-columns: 35px 35px;
    grid-auto-rows: 32px;
    gap: 4px 1px;
    padding-top: 2px;
}
.mini button {
    display: flex;
    align-items: center;
    justify-content: center;
}
.interface .stack {
    margin-left: 9px;
}
.interface h2 {
    position: relative;
}
.launcher {
    position: absolute;
    right: 0;
    top: 8px;
}

/* drawing tabs */
.file-tabs {
    display: flex;
    align-items: flex-end;
    height: 45px;
    padding-left: 12px;
    border-bottom: 6px solid #3b4453;
}
.file-tab {
    display: flex;
    align-items: center;
    gap: 12px;
    width: 212px;
    height: 33px;
    padding: 4px 32px 0;
    background: #2f3643;
    color: #b4b8be;
    clip-path: polygon(0 100%, 8px 88%, 16px 20%, 22px 4%, 28px 0, calc(100% - 28px) 0, calc(100% - 22px) 4%, calc(100% - 16px) 20%, calc(100% - 8px) 88%, 100% 100%);
}
.file-tab.active {
    width: 226px;
    margin-left: -22px;
    background: #3b4453;
    color: #fff;
    font-weight: bold;
}
.close {
    width: 14px;
    height: 14px;
    color: #a5a9af;
}
.add-tab {
    width: 32px;
    height: 20px;
    margin-bottom: 6px;
    background: #2f3643;
    color: #a5a9af;
    border-radius: 2px 14px 2px 14px;
    font-size: 24px;
    font-weight: bold;
    line-height: 18px;
}

/* drawing area */
.canvas {
    flex: 1;
    position: relative;
    display: flex;
    flex-direction: column;
    justify-content: space-between;
    min-height: 0;
    background: #212830;
}
.drawing {
    position: absolute;
    inset: 0;
    width: 100%;
    height: 100%;
    fill: none;
    shape-rendering: crispEdges;
}
.sheet {
    stroke: #fff;
}
.thick {
    stroke-width: 3;
}
.bend {
    stroke: #e60000;
}
.part {
    stroke: #a38d4e;
}
.solid {
    fill: #a38d4e;
}
.ring {
    stroke: #a38d4e;
    stroke-width: 4;
}
.view-head {
    position: relative;
    display: flex;
    justify-content: space-between;
    padding: 6px 12px 0 1px;
}
.view-label {
    color: #e0e0e0;
}
.mdi {
    display: flex;
    align-items: center;
    gap: 14px;
    color: #eee;
    padding-top: 4px;
}
.navbar {
    position: absolute;
    top: 37px;
    right: 2px;
    display: flex;
    flex-direction: column;
    align-items: center;
    gap: 8px;
    width: 46px;
    padding: 1px 0 3px;
    background: #5b6068;
    border: 1px solid #666b73;
    border-radius: 3px;
}
.navbar svg {
    fill: none;
    stroke: #474c52;
    stroke-width: 2;
}
.navbar .first {
    margin-top: 2px;
}
.navbar .caret {
    margin-top: 2px;
    color: #474c52;
    stroke: none;
}
.navbar .dot {
    align-self: flex-end;
    margin-right: 2px;
}
.navbar hr {
    width: 40px;
    height: 1px;
    margin: -1px 0 -2px;
    border: none;
    background: #6a6f76;
}
.command {
    position: relative;
    align-self: center;
    display: flex;
    width: 60%;
    height: 76px;
    margin-bottom: 1px;
    font-family: 'DejaVu Sans Mono', monospace;
    font-size: 18px;
}
.command-grip {
    display: flex;
    flex-direction: column;
    align-items: center;
    justify-content: space-between;
    width: 37px;
    padding: 6px 0 2px;
    background: #2b313e;
    color: #c8c8c8;
}
.command-main {
    flex: 1;
    display: flex;
    flex-direction: column;
    gap: 2px;
    padding: 1px 0;
}
.history {
    flex: 1;
    padding: 16px 3px 0;
    background: #969799;
    color: #000;
}
.prompt {
    display: flex;
    align-items: center;
    gap: 4px;
    height: 29px;
    padding: 0 5px 0 7px;
    background: #bbbcbe;
}
.prompt .caret {
    color: #55585c;
}
.prompt input {
    flex: 1;
    padding-left: 6px;
    color: #222;
    font-family: 'Liberation Mono', monospace;
    font-style: italic;
}
.prompt input::placeholder {
    color: #66696d;
    opacity: 1;
}
.up {
    transform: rotate(180deg);
}

/* status bar */
.statusbar {
    display: flex;
    justify-content: space-between;
    height: 43px;
    border-top: 2px solid #4a4f56;
}
.layout-tabs {
    display: flex;
    padding-left: 12px;
}
.layout-tab {
    height: 26px;
    padding: 2px 22px 0;
    background: #2f3643;
    color: #b4b8be;
    margin-right: -8px;
    clip-path: polygon(0 0, 100% 0, calc(100% - 5px) 20%, calc(100% - 10px) 90%, calc(100% - 14px) 100%, 14px 100%, 10px 90%, 5px 20%);
}
.layout-tab.active {
    background: #3b4453;
    color: #fff;
    font-weight: bold;
    position: relative;
}
.add-layout {
    width: 32px;
    height: 23px;
    margin-left: 12px;
    background: #2f3643;
    color: #a5a9af;
    border-radius: 14px 2px 14px 2px;
    font-size: 24px;
    font-weight: bold;
    line-height: 20px;
}
.status {
    display: flex;
    gap: 5px;
    padding-top: 2px;
}
.group {
    display: flex;
    align-items: center;
    height: 36px;
    padding: 0 1px;
    background: #3b4453;
}
.group button {
    display: flex;
    align-items: center;
    justify-content: center;
    width: 35px;
    height: 34px;
}
.group .on {
    background: #5f8fc4;
    border: none;
    width: 34px;
    margin: 0 1px;
}
.group .text {
    width: auto;
    padding: 0 4px;
    font-size: 18px;
}
.group .wide {
    width: 45px;
}
.group .caret {
    margin: 0 6px;
}
.group .caret:last-child {
    margin-right: 4px;
}
```
